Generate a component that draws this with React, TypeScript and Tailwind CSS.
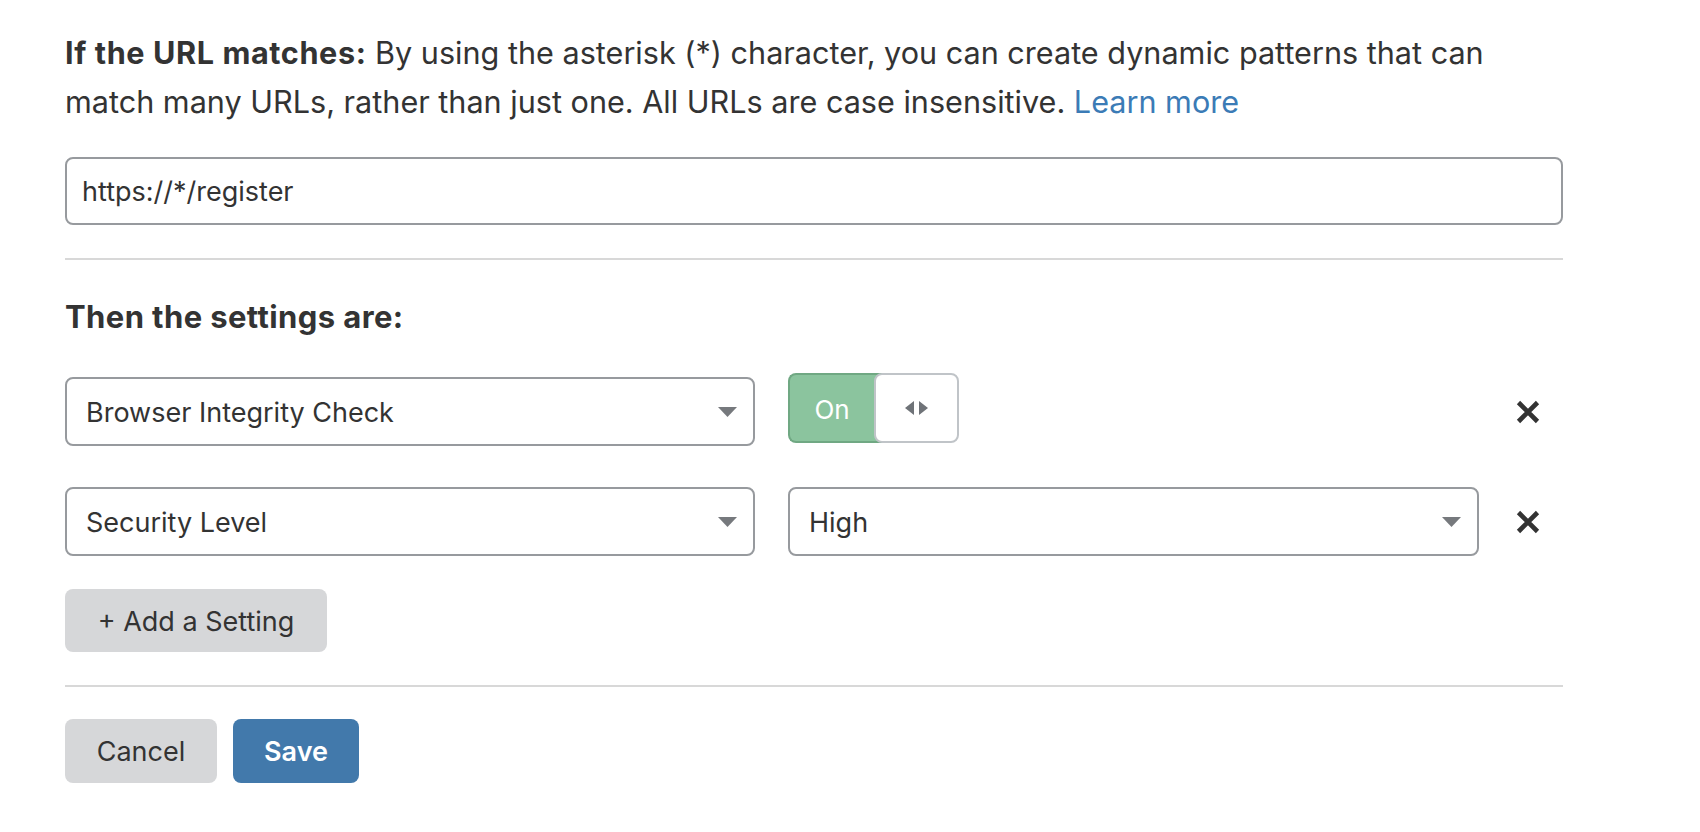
import React from "react";

function Caret() {
  return (
    <svg width="19" height="10" viewBox="0 0 19 10" className="shrink-0">
      <polygon points="0,0 19,0 9.5,10" fill="#76797d" />
    </svg>
  );
}

function XIcon() {
  return (
    <svg width="24" height="24" viewBox="0 0 24 24">
      <path d="M2.5 2.5 L21.5 21.5 M21.5 2.5 L2.5 21.5" stroke="#333333" strokeWidth="4.6" strokeLinecap="butt" fill="none" />
    </svg>
  );
}

function Select({ label, width }: { label: string; width: string }) {
  return (
    <div
      className={`${width} h-[69px] shrink-0 flex items-center justify-between rounded-[8px] border-2 border-[#979a9e] bg-white pl-[19px] pr-[16px]`}
    >
      <span className="pt-[4px]">{label}</span>
      <Caret />
    </div>
  );
}

export default function App() {
  return (
    <div
      className="w-[1700px] h-[832px] bg-white text-[#333333] text-[27px]"
      style={{ fontFamily: "Inter, 'Noto Sans', 'Liberation Sans', sans-serif" }}
    >
      <div className="ml-[65px] w-[1498px] pt-[28px]">
        <p className="text-[30.6px] leading-[49px]">
          <span className="font-bold tracking-[0.6px]">If the URL matches:</span> By using the asterisk (*) character,
          you can create dynamic patterns that can
          <br />
          match many URLs, rather than just one. All URLs are case insensitive.{" "}
          <span className="text-[#3b7bb6]">Learn more</span>
        </p>

        <div className="mt-[31px] h-[68px] flex items-center rounded-[8px] border-2 border-[#979a9e] px-[15px] pt-[3px]">
          https://*/register
        </div>

        <div className="mt-[33px] h-[2px] bg-[#d8d8d8]" />

        <h2 className="mt-[39px] text-[31px] leading-[36px] font-bold tracking-[0.4px]">Then the settings are:</h2>

        <div className="mt-[42px] flex items-start">
          <Select label="Browser Integrity Check" width="w-[690px]" />
          <div className="ml-[33px] -mt-[4px] w-[171px] h-[70px] flex">
            <div className="flex-1 -mr-[8px] pr-[8px] pt-[2px] flex items-center justify-center rounded-l-[8px] border-2 border-r-0 border-[#70a883] bg-[#8bc49e] text-white text-[26px]">
              On
            </div>
            <div className="w-[85px] flex items-center justify-center gap-[5px] rounded-[8px] border-2 border-[#c0c4c8] bg-white">
              <svg width="9" height="14" viewBox="0 0 9 14">
                <polygon points="9,0 9,14 0,7" fill="#6f7378" />
              </svg>
              <svg width="9" height="14" viewBox="0 0 9 14">
                <polygon points="0,0 0,14 9,7" fill="#6f7378" />
              </svg>
            </div>
          </div>
          <div className="flex-1 h-[69px] flex items-center justify-end pr-[23px]">
            <XIcon />
          </div>
        </div>

        <div className="mt-[41px] flex items-center">
          <Select label="Security Level" width="w-[690px]" />
          <div className="ml-[33px]">
            <Select label="High" width="w-[691px]" />
          </div>
          <div className="flex-1 h-[69px] flex items-center justify-end pr-[23px]">
            <XIcon />
          </div>
        </div>

        <button className="mt-[33px] h-[63px] w-[262px] pt-[3px] rounded-[8px] bg-[#d6d7d9] text-[#333333] flex items-center justify-center">
          + Add a Setting
        </button>

        <div className="mt-[33px] h-[2px] bg-[#d8d8d8]" />

        <div className="mt-[32px] flex gap-[16px]">
          <button className="h-[64px] w-[152px] pt-[3px] rounded-[8px] bg-[#d6d7d9] text-[#333333] flex items-center justify-center">
            Cancel
          </button>
          <button className="h-[64px] w-[126px] pt-[3px] rounded-[8px] bg-[#4279ab] text-white font-semibold flex items-center justify-center">
            Save
          </button>
        </div>
      </div>
    </div>
  );
}
